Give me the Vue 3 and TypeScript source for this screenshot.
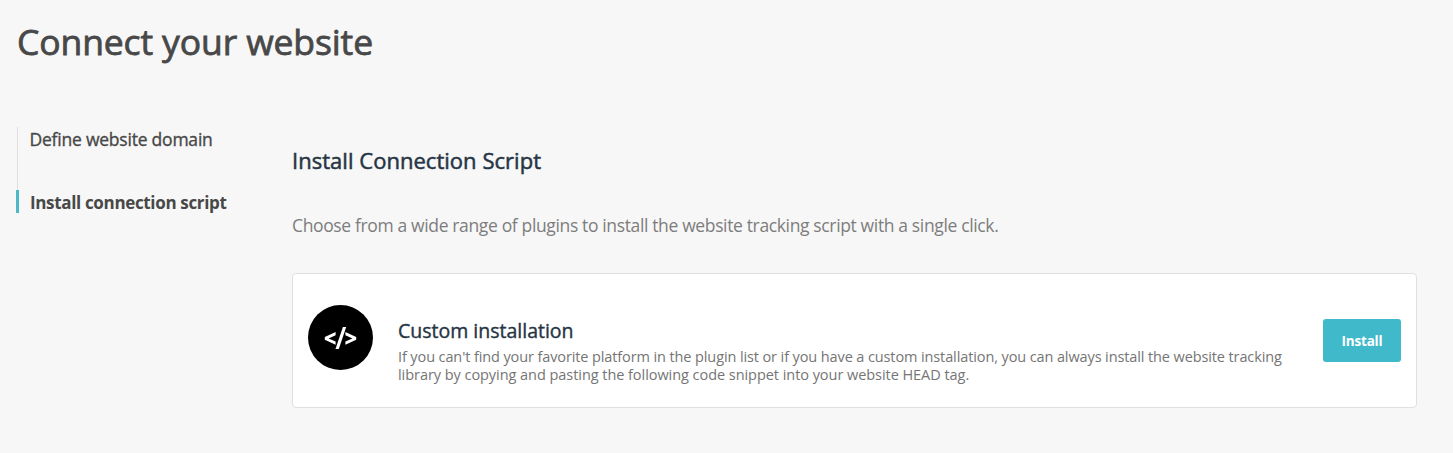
<script setup lang="ts">
interface Step {
  label: string
  active: boolean
}

const steps: Step[] = [
  { label: 'Define website domain', active: false },
  { label: 'Install connection script', active: true },
]
</script>

<template>
  <main class="page">
    <h1 class="title">Connect your website</h1>
    <div class="layout">
      <nav class="steps">
        <div v-for="step in steps" :key="step.label" class="step" :class="{ active: step.active }">
          <span>{{ step.label }}</span>
        </div>
      </nav>
      <section class="content">
        <h2 class="heading">Install Connection Script</h2>
        <p class="intro">Choose from a wide range of plugins to install the website tracking script with a single click.</p>
        <article class="card">
          <div class="badge">
            <svg width="65" height="65" viewBox="0 0 65 65" fill="#fff">
              <path d="M27.6 27 V30.2 L20.6 33.4 L27.6 36.5 V39.8 L16.8 34.8 V31.9 Z" />
              <path d="M34.9 22 H38.2 L30.8 44 H27.5 Z" />
              <path d="M37.4 27 V30.2 L44.4 33.4 L37.4 36.5 V39.8 L48.2 34.8 V31.9 Z" />
            </svg>
          </div>
          <div class="details">
            <h3 class="name">Custom installation</h3>
            <p class="desc">
              <span class="line one">If you can't find your favorite platform in the plugin list or if you have a custom installation, you can always install the website tracking</span>
              <span class="line two">library by copying and pasting the following code snippet into your website HEAD tag.</span>
            </p>
          </div>
          <button class="install" type="button">Install</button>
        </article>
      </section>
    </div>
  </main>
</template>

<style>
body {
  margin: 0;
  background: #f7f7f7;
}
</style>

<style scoped>
.page {
  box-sizing: border-box;
  width: 1453px;
  height: 453px;
  padding: 17px 36px 0 16px;
  overflow: hidden;
  background: #f7f7f7;
  font-family: "Open Sans", "Noto Sans", sans-serif;
  white-space: nowrap;
}
h1, h2, h3, p {
  margin: 0;
}
.title {
  height: 110px;
  padding-left: 1px;
  color: #484848;
  font-size: 35.5px;
  font-weight: 400;
  letter-spacing: -0.12px;
  line-height: 48px;
  -webkit-text-stroke: 0.8px #484848;
}
.layout {
  display: flex;
}
.steps {
  width: 276px;
}
.step {
  box-sizing: border-box;
  height: 63px;
  margin-left: 1px;
  padding-left: 11.5px;
  border-left: 1px solid #e0e0e0;
  color: #484848;
  font-size: 17.5px;
  font-weight: 400;
  letter-spacing: -0.22px;
  line-height: 25px;
  -webkit-text-stroke: 0.35px #484848;
}
.step.active {
  height: 23px;
  margin-left: 0;
  padding-left: 11px;
  border-left: 3px solid #4db8c6;
  font-size: 17px;
  font-weight: 700;
  letter-spacing: -0.34px;
  -webkit-text-stroke: 0;
}
.content {
  flex: 1;
}
.heading {
  padding-top: 18px;
  color: #263544;
  font-size: 22px;
  font-weight: 400;
  letter-spacing: 0.03px;
  line-height: 30px;
  -webkit-text-stroke: 0.5px #263544;
}
.intro {
  margin-top: 38px;
  color: #7d7d7d;
  font-size: 17.5px;
  letter-spacing: -0.36px;
  line-height: 24px;
}
.card {
  box-sizing: border-box;
  display: flex;
  height: 135px;
  margin-top: 36px;
  padding: 31px 15px 0;
  border: 1px solid #e0e0e0;
  border-radius: 4px;
  background: #fff;
}
.badge {
  width: 65px;
  height: 65px;
  border-radius: 50%;
  background: #000;
}
.badge svg {
  display: block;
}
.details {
  flex: 1;
  margin-left: 25px;
  padding-top: 13px;
}
.name {
  color: #263544;
  font-size: 19.5px;
  font-weight: 400;
  line-height: 26px;
  -webkit-text-stroke: 0.4px #263544;
}
.desc {
  margin-top: 4px;
  color: #757575;
  font-size: 14.5px;
  line-height: 18px;
}
.line {
  display: block;
}
.one {
  letter-spacing: -0.11px;
}
.two {
  letter-spacing: -0.05px;
}
.install {
  width: 78px;
  height: 43px;
  margin-top: 14px;
  padding: 1px 0 0;
  border: 0;
  border-radius: 3px;
  background: #40b9ca;
  color: #fff;
  font: 700 13.5px/42px "Open Sans", sans-serif;
  letter-spacing: -0.2px;
}
</style>
